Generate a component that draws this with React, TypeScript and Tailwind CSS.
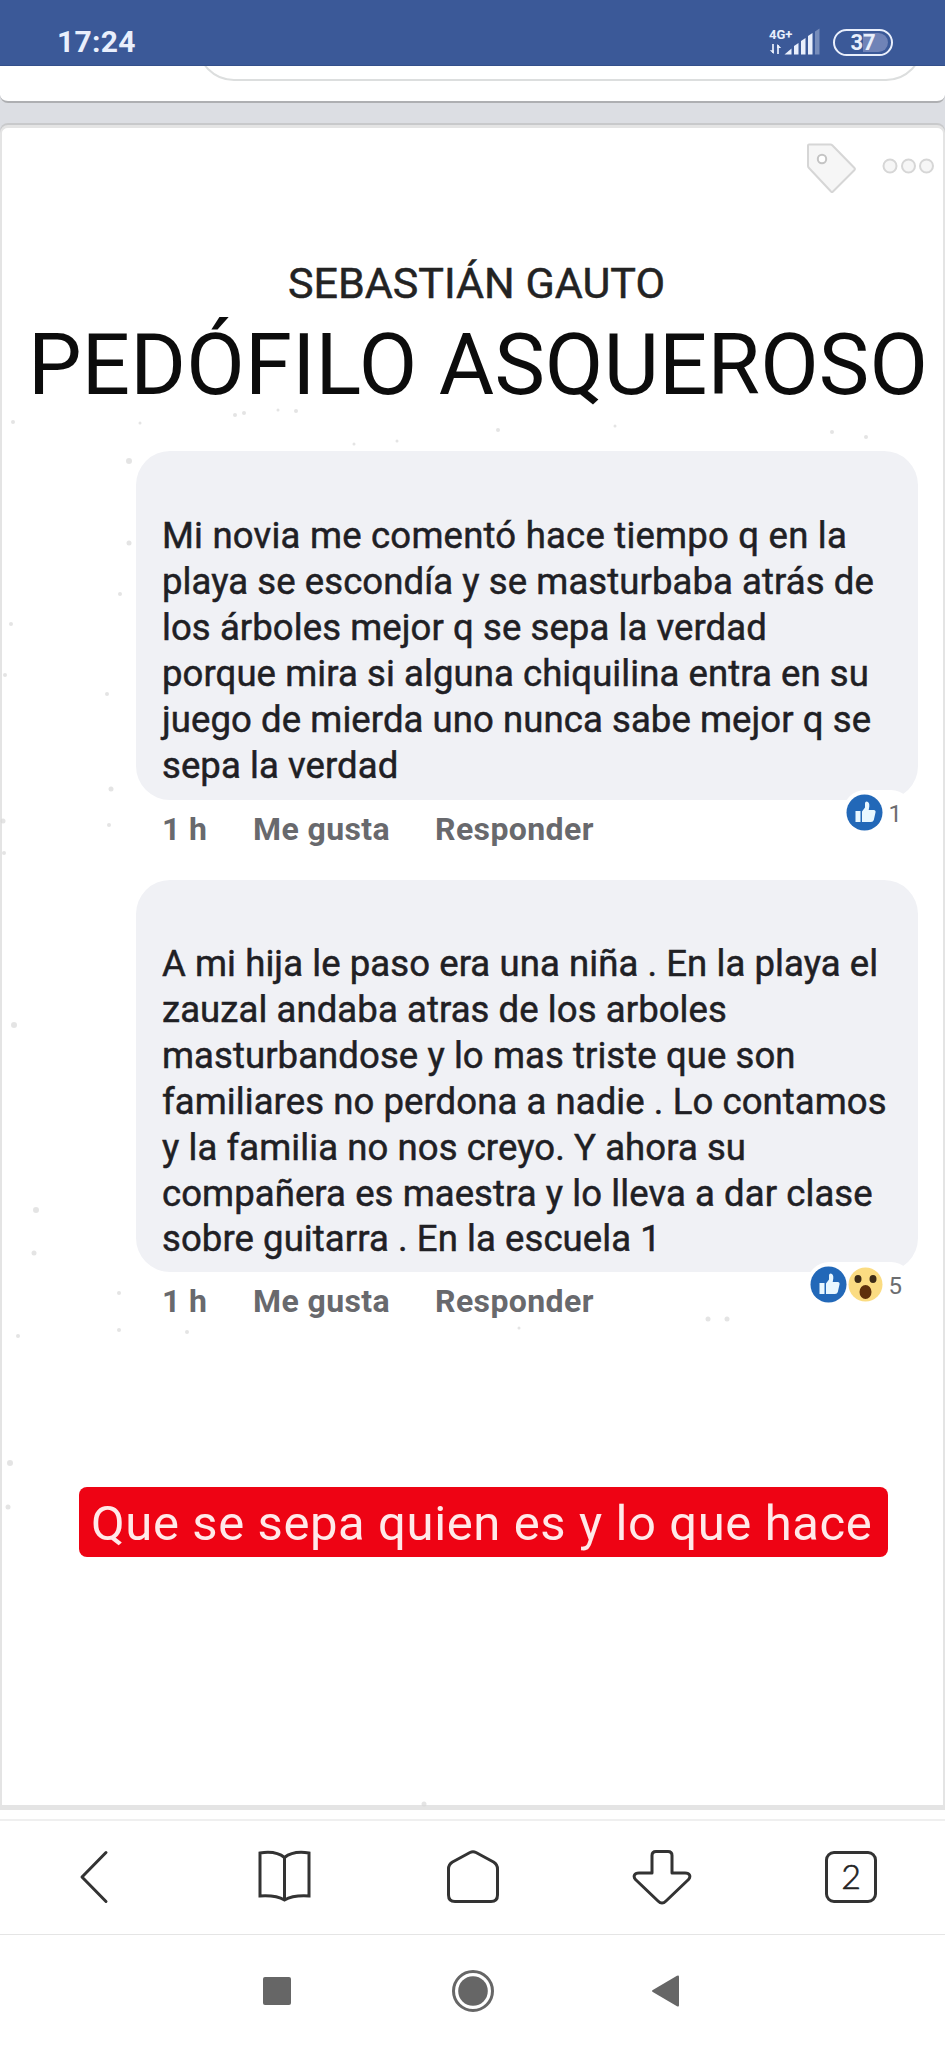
import type { ReactNode } from 'react';

type Comment = {
  lines: string[];
  count: number;
  wow?: boolean;
};

const first: Comment = {
  lines: [
    'Mi novia me comentó hace tiempo q en la',
    'playa se escondía y se masturbaba atrás de',
    'los árboles mejor q se sepa la verdad',
    'porque mira si alguna chiquilina entra en su',
    'juego de mierda uno nunca sabe mejor q se',
    'sepa la verdad',
  ],
  count: 1,
};

const second: Comment = {
  lines: [
    'A mi hija le paso era una niña . En la playa el',
    'zauzal andaba atras de los arboles',
    'masturbandose y lo mas triste que son',
    'familiares no perdona a nadie . Lo contamos',
    'y la familia no nos creyo. Y ahora su',
    'compañera es maestra y lo lleva a dar clase',
    'sobre guitarra . En la escuela 1',
  ],
  count: 5,
  wow: true,
};

// faint specks scattered over the post: x, y, radius
const specks = [
  [235, 415, 2], [244, 413, 2], [278, 410, 1.5], [296, 411, 2], [140, 423, 1.5],
  [498, 430, 2], [615, 426, 1.5], [832, 432, 2], [866, 437, 2], [354, 444, 1.5],
  [397, 441, 1.5], [129, 461, 3], [129, 543, 2.5], [120, 594, 2], [13, 422, 2],
  [11, 624, 2], [5, 675, 2], [107, 694, 2], [111, 789, 2.5], [109, 825, 2],
  [3, 821, 2.5], [4, 853, 2], [14, 1025, 3], [36, 1210, 3], [34, 1253, 2.5],
  [119, 1293, 2], [119, 1330, 2], [187, 1332, 2], [519, 1328, 1.5], [708, 1319, 2.5],
  [727, 1319, 2.5], [18, 1336, 2], [10, 1463, 3], [8, 1507, 2.5], [424, 1804, 2.5],
];

function StatusBar() {
  return (
    <header className="flex h-[66px] shrink-0 items-end justify-between border-b border-[#34508b] bg-[#3b5998] pr-[52px] pl-[57px] text-[#e9effc]">
      <span className="pb-[7px] text-[30px] leading-[32px] font-bold tracking-[0.3px]">17:24</span>
      <div className="flex items-end gap-[13px] pb-[9px]">
        <div className="h-[28px] w-[51px]">
          <div className="h-[13px] text-[13px] leading-[13px] font-bold">4G+</div>
          <svg width="51" height="15" viewBox="0 0 51 15" className="overflow-visible" fill="currentColor">
            <path d="M4 3v9M9 13V4" stroke="currentColor" strokeWidth="1.7" />
            <path d="M4.8 13L.8 9.2h4zM8.2 3l4 4h-4z" />
            <path d="M15.5 13.5l7-6v6z" />
            <path d="M25 5l4.500-3v11.500H25z" />
            <path d="M32 0l4.500-3v16.500H32z" />
            <path d="M39-5l4.500-3v21.500H39z" />
            <path d="M46-9.500l4.500-3v26H46z" opacity=".35" />
          </svg>
        </div>
        <div className="relative flex h-[27px] w-[60px] items-center justify-center rounded-full border-[2.5px] border-[#e9effc] text-[22px] leading-none font-bold">
          <span className="absolute inset-y-[2px] right-[3px] left-[28px] rounded-r-full bg-[#7083b7]" />
          <span className="relative">37</span>
        </div>
      </div>
    </header>
  );
}

function PreviousPost() {
  return (
    <div className="h-[59px] shrink-0 bg-[#dcdee3]">
      <div className="h-[37px] overflow-hidden rounded-b-[8px] border-b-2 border-[#aeafb2] bg-white pr-[22px] pl-[197px]">
        <div className="-mt-[61px] h-[76px] rounded-[37px] border-2 border-[#dcdede]" />
      </div>
    </div>
  );
}

function PostActions() {
  return (
    <div className="flex h-[128px] items-start justify-end pt-[13px] pr-[9px]">
      <svg width="130" height="56" viewBox="804 141 130 56" fill="#f6f6f6" stroke="#d6d6d6" strokeWidth="2">
        <path d="M808 145.500q0-1 1-1h21.500q1 0 2 1l22 22.500q1 1 0 2l-21.500 21.500q-1 1-2 0L809 168q-1-1-1-2z" />
        <circle cx="822" cy="159" r="4.200" fill="#fff" stroke="#c4c4c4" />
        <circle cx="890" cy="166" r="6.500" />
        <circle cx="908.500" cy="166" r="6.500" />
        <circle cx="926.500" cy="166" r="6.500" />
      </svg>
    </div>
  );
}

function LikeBadge() {
  return (
    <svg width="37" height="37" viewBox="0 0 37 37">
      <circle cx="18.500" cy="18.500" r="18" fill="#2268b8" />
      <path
        d="M9.500 17h5v11h-5zM16 17.500l3-4V9.500q0-2 1.700-2 3 .3 2.600 5l-.6 3.500h5q2.300.3 1.800 2.500l-1.700 7.500q-.6 2-2.800 2H16z"
        fill="#e8f7ff"
      />
    </svg>
  );
}

function WowBadge() {
  return (
    <svg className="ml-px" width="35" height="37" viewBox="0 0 35 37">
      <circle cx="17.500" cy="18.500" r="17" fill="#fbdc82" />
      <ellipse cx="10" cy="13" rx="3.500" ry="4" fill="#3e2c17" />
      <ellipse cx="25" cy="13" rx="3.500" ry="4" fill="#3e2c17" />
      <ellipse cx="17.500" cy="26" rx="6" ry="7" fill="#5e300c" />
    </svg>
  );
}

function CommentItem({ comment, className }: { comment: Comment; className: string }) {
  return (
    <article className="relative ml-[134px] w-[782px]">
      <div
        className={`rounded-[34px] bg-[#f0f1f5] pl-[26px] text-[36.500px] leading-[45.900px] tracking-[0.08px] text-[#1f2024] [-webkit-text-stroke:0.500px] ${className}`}
      >
        {comment.lines.map((line) => (
          <p key={line} className="whitespace-nowrap">
            {line}
          </p>
        ))}
      </div>
      <div className="flex h-[80px] items-start pt-[9px] pl-[26px] text-[32px] leading-[40px] font-bold tracking-[0.400px] text-[#68696d]">
        <span className="w-[91px]">1 h</span>
        <span className="w-[182px]">Me gusta</span>
        <span>Responder</span>
      </div>
      <div className="absolute right-[5px] bottom-[46px] flex h-[44px] items-center rounded-full bg-white pr-[11px] pl-[3px] text-[24px] leading-none text-[#6c6d70]">
        <LikeBadge />
        {comment.wow && <WowBadge />}
        <span className="mt-[3px] ml-[6px]">{comment.count}</span>
      </div>
    </article>
  );
}

function Post() {
  return (
    <div className="shrink-0 bg-[#dcdee3]">
      <main className="relative h-[1685px] rounded-t-[8px] border-x-2 border-t-[3px] border-b-[5px] border-[#e4e4e4] bg-white shadow-[0_-2px_0_#c8c9cb]">
        <PostActions />
        <h2 className="mt-[2px] ml-[286px] text-[43px] leading-[50px] whitespace-nowrap text-[#232323] [-webkit-text-stroke:0.500px]">
          SEBASTIÁN GAUTO
        </h2>
        <h1 className="mt-[9px] mb-[38px] ml-[26px] text-[85px] leading-[96px] tracking-[0.200px] whitespace-nowrap text-[#0c0c0c]">
          PEDÓFILO ASQUEROSO
        </h1>
        <CommentItem comment={first} className="h-[349px] pt-[62px] [&>p:first-child]:tracking-[0.220px]" />
        <CommentItem comment={second} className="h-[392px] pt-[61px]" />
        <div className="mt-[135px] ml-[77px] flex h-[70px] w-[809px] items-center rounded-[8px] bg-[#ee0314] pt-[3px] pl-[12px] text-[49px] leading-[60px] tracking-[0.600px] whitespace-nowrap text-[#ffe9e9]">
          Que se sepa quien es y lo que hace
        </div>
        <svg className="pointer-events-none absolute -top-[128px] -left-[2px]" width="945" height="1810" fill="#d9d9d9">
          {specks.map(([x, y, r]) => (
            <circle key={`${x}-${y}`} cx={x} cy={y} r={r} opacity=".7" />
          ))}
        </svg>
      </main>
    </div>
  );
}

function ToolIcon({ children }: { children: ReactNode }) {
  return (
    <svg
      width="60"
      height="60"
      viewBox="-30 -30 60 60"
      fill="none"
      stroke="#333"
      strokeWidth="3"
      strokeLinecap="round"
      strokeLinejoin="round"
    >
      {children}
    </svg>
  );
}

function BrowserBar() {
  return (
    <nav className="mt-[9px] grid h-[116px] shrink-0 grid-cols-5 place-items-center border-t-2 border-b border-t-[#efefef] border-b-[#e5e5e5] pb-[2px]">
      <ToolIcon>
        <path d="M11-24.500L-13 0l24 24.500" />
      </ToolIcon>
      <ToolIcon>
        <path d="M.5-19.500Q-8-26.500-24-24v43Q-8 18 .5 23Q9 18 25 19v-43Q9-26.500.5-19.500zV23" strokeLinejoin="miter" />
      </ToolIcon>
      <ToolIcon>
        <path d="M-3-24.500q3-1.500 6 0L20.500-15q4 2.500 4 7v26q0 6.500-6.500 6.500h-36q-6.500 0-6.500-6.500V-8q0-4.500 4-7z" />
      </ToolIcon>
      <ToolIcon>
        <path d="M-6-25.500H6q4 0 4 4v17.500h13c5 0 6 3.500 3.500 6.500L4 24q-4 4-8 0L-26.500 2.500C-29-.5-28-4-23-4h13v-17.500q0-4 4-4z" />
      </ToolIcon>
      <span className="flex size-[52px] items-center justify-center rounded-[9px] border-[3px] border-[#333] pb-[2px] pl-px font-['Lato'] text-[34px] leading-none font-light text-[#222] [-webkit-text-stroke:0.600px]">
        2
      </span>
    </nav>
  );
}

function SystemBar() {
  return (
    <footer className="flex flex-1 items-start pt-[35px] pl-[263px]">
      <span className="mt-[7px] size-[28px] rounded-[2px] bg-[#666]" />
      <svg className="ml-[161px]" width="42" height="42" viewBox="0 0 42 42" fill="#666">
        <circle cx="21" cy="21" r="19.500" fill="none" stroke="#666" strokeWidth="3" />
        <circle cx="21" cy="21" r="14.800" />
      </svg>
      <svg className="mt-[5px] ml-[158px]" width="27" height="32" viewBox="0 0 27 32" fill="#666">
        <path d="M.8 15L25 .8q2-1 2 1v28.400q0 2-2 1L.8 17q-1.600-1 0-2z" />
      </svg>
    </footer>
  );
}

export default function App() {
  return (
    <div className="flex h-[2048px] w-[945px] flex-col overflow-hidden bg-white font-['Roboto',sans-serif]">
      <StatusBar />
      <PreviousPost />
      <Post />
      <BrowserBar />
      <SystemBar />
    </div>
  );
}
